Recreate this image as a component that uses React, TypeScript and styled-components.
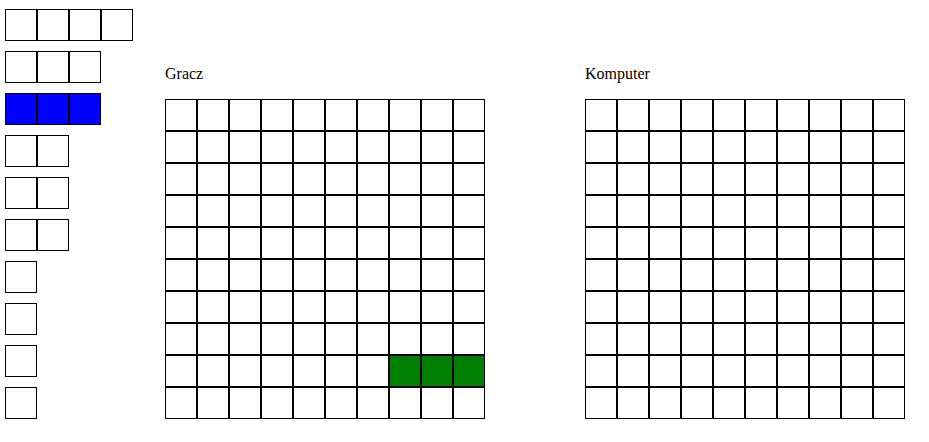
import React from "react";
import styled, { createGlobalStyle } from "styled-components";

const GlobalStyle = createGlobalStyle`
  html, body {
    margin: 0;
    padding: 0;
    background: #ffffff;
    font-family: "Liberation Serif", "Times New Roman", serif;
    font-size: 16px;
    color: #000000;
  }
`;

const Page = styled.div`
  display: flex;
  align-items: flex-end;
  padding: 9px 5px;
`;

const ShipList = styled.div`
  display: flex;
  flex-direction: column;
  gap: 10px;
  width: 128px;
  margin-right: 32px;
`;

const Ship = styled.div`
  display: flex;
`;

const Cell = styled.div<{ $fill?: string }>`
  width: 30px;
  height: 30px;
  border: 1px solid #000000;
  background: ${(p) => p.$fill ?? "#ffffff"};
`;

const Boards = styled.div`
  display: flex;
  gap: 100px;
`;

const Board = styled.div`
  display: flex;
  flex-direction: column;
`;

const Label = styled.div`
  line-height: 18px;
  margin-bottom: 16px;
`;

const Grid = styled.div`
  display: grid;
  grid-template-columns: repeat(10, 32px);
  grid-auto-rows: 32px;
`;

const ships: { size: number; color?: string }[] = [
  { size: 4 },
  { size: 3 },
  { size: 3, color: "#0000ff" },
  { size: 2 },
  { size: 2 },
  { size: 2 },
  { size: 1 },
  { size: 1 },
  { size: 1 },
  { size: 1 },
];

const playerShip = new Set(["8-7", "8-8", "8-9"]);

function BoardGrid({ marked }: { marked?: Set<string> }) {
  const cells = [];
  for (let r = 0; r < 10; r++) {
    for (let c = 0; c < 10; c++) {
      const key = `${r}-${c}`;
      cells.push(<Cell key={key} $fill={marked?.has(key) ? "#008000" : undefined} />);
    }
  }
  return <Grid>{cells}</Grid>;
}

export default function App() {
  return (
    <>
      <GlobalStyle />
      <Page>
        <ShipList>
          {ships.map((s, i) => (
            <Ship key={i}>
              {Array.from({ length: s.size }).map((_, j) => (
                <Cell key={j} $fill={s.color} />
              ))}
            </Ship>
          ))}
        </ShipList>
        <Boards>
          <Board>
            <Label>Gracz</Label>
            <BoardGrid marked={playerShip} />
          </Board>
          <Board>
            <Label>Komputer</Label>
            <BoardGrid />
          </Board>
        </Boards>
      </Page>
    </>
  );
}
